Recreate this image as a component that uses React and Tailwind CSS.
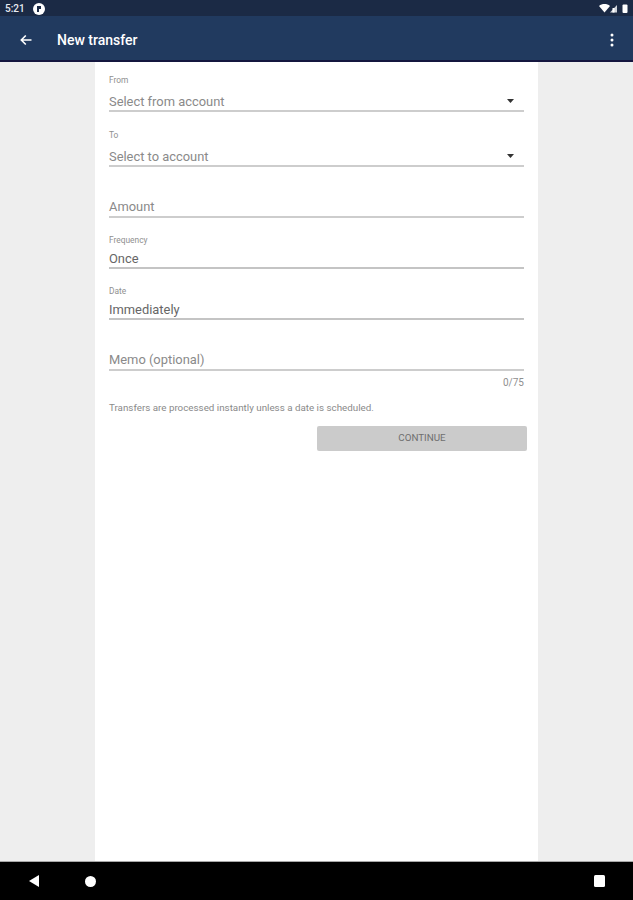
const font = { fontFamily: 'Roboto, "Liberation Sans", sans-serif' };

function Caret() {
  return (
    <svg width="7" height="4" viewBox="0 0 7 4" className="self-center mb-[2px] mr-[10px]">
      <path d="M0 0H7L3.5 4Z" fill="#333" />
    </svg>
  );
}

function Field({ label, value, dark, caret, heightClass, labelGapClass = "mb-[8px]", lineClass = "bg-[#cdcdcd]", rowClass = "h-[18px]" }) {
  return (
    <div className={`flex flex-col justify-end ${heightClass}`}>
      {label && <div className={`text-[8.4px] leading-[10px] text-[#8f8f8f] ${labelGapClass}`}>{label}</div>}
      <div className={`flex items-start justify-between ${rowClass}`}>
        <span className={`text-[12.9px] leading-[18px] ${dark ? "text-[#666666]" : "text-[#8a8a8a]"}`}>{value}</span>
        {caret && <Caret />}
      </div>
      <div className={`h-[2px] mt-[-1px] ${lineClass}`} />
    </div>
  );
}

export default function App() {
  return (
    <div style={font} className="w-[633px] h-[900px] flex flex-col overflow-hidden bg-[#eeeeee]">
      <div className="h-[16px] shrink-0 bg-[#1b2a45] flex items-center pl-[5px] pr-[5px] pt-[1px] text-white">
        <span className="text-[10px] leading-[15px] font-medium w-[23px] text-[#e8ecf2]">5:21</span>
        <span className="ml-[5px] w-[12px] h-[12px] rounded-full bg-white flex items-center justify-center">
          <svg width="8" height="8" viewBox="0 0 8 8"><path d="M2 1H6V4H4V7H2Z" fill="#1b2a45" /></svg>
        </span>
        <span className="ml-auto flex items-center gap-[1px]">
          <svg width="22" height="9" viewBox="0 0 22 9">
            <path d="M0 2C3-.6 8-.6 11 2L5.500 8.500Z" fill="#fff" />
            <path d="M11 8.500L18 1V8.500Z" fill="#cfd3da" />
            <rect x="13.500" y="4" width="2" height="4.500" fill="#fff" />
          </svg>
          <svg width="6" height="9" viewBox="0 0 6 9"><rect x="0.500" y="0.500" width="5" height="8.500" rx="1" fill="#fff" /></svg>
        </span>
      </div>
      <div className="h-[46px] shrink-0 bg-[#213a5f] border-b-2 border-[#14163f] flex items-center pt-[4px] text-white">
        <svg width="14" height="14" viewBox="0 0 14 14" fill="none" className="ml-[19px]">
          <path d="M12.500 7H2.500M6.800 2.500L2.300 7L6.800 11.500" stroke="#fff" strokeWidth="1.600" />
        </svg>
        <span className="ml-[24px] text-[14px] leading-[20px] font-medium">New transfer</span>
        <svg width="4" height="14" viewBox="0 0 4 14" className="ml-auto mr-[19px]" fill="#fff">
          <circle cx="2" cy="2" r="1.500" /><circle cx="2" cy="7" r="1.500" /><circle cx="2" cy="12" r="1.500" />
        </svg>
      </div>
      <div className="flex-1 flex justify-center min-h-0">
        <main className="w-[443px] bg-white pl-[14px] pr-[11px] flex flex-col">
          <div className="pr-[3px]">
            <Field heightClass="h-[50px]" label="From" value="Select from account" caret />
            <Field heightClass="h-[55px]" label="To" value="Select to account" caret />
            <Field heightClass="h-[51px]" value="Amount" rowClass="h-[19px]" />
            <Field heightClass="h-[51px]" label="Frequency" value="Once" dark labelGapClass="mb-[5px]" lineClass="bg-[#c4c4c4]" />
            <Field heightClass="h-[51px]" label="Date" value="Immediately" dark labelGapClass="mb-[5px]" lineClass="bg-[#c4c4c4]" />
            <Field heightClass="h-[51px]" value="Memo (optional)" rowClass="h-[19px]" />
            <div className="text-right text-[10px] leading-[12px] text-[#8f8f8f] mt-[6px]">0/75</div>
            <div className="text-[9.8px] leading-[12px] text-[#8a8a8a] mt-[13px]">Transfers are processed instantly unless a date is scheduled.</div>
          </div>
          <div className="flex justify-end mt-[12px]">
            <div className="w-[210px] h-[25px] bg-[#cbcbcb] rounded-[2px] flex items-center justify-center text-[9.8px] font-normal text-[#6f6f6f]">CONTINUE</div>
          </div>
        </main>
      </div>
      <div className="h-[39px] shrink-0 bg-black border-t border-[#a8a8a8] flex items-center">
        <svg width="12" height="14" viewBox="0 0 12 14" className="ml-[28px]"><path d="M11 1V13L1 7Z" fill="#fff" /></svg>
        <span className="ml-[45px] w-[11px] h-[11px] rounded-full bg-white" />
        <span className="ml-auto mr-[28px] w-[11px] h-[12px] rounded-[1.500px] bg-white" />
      </div>
    </div>
  );
}
